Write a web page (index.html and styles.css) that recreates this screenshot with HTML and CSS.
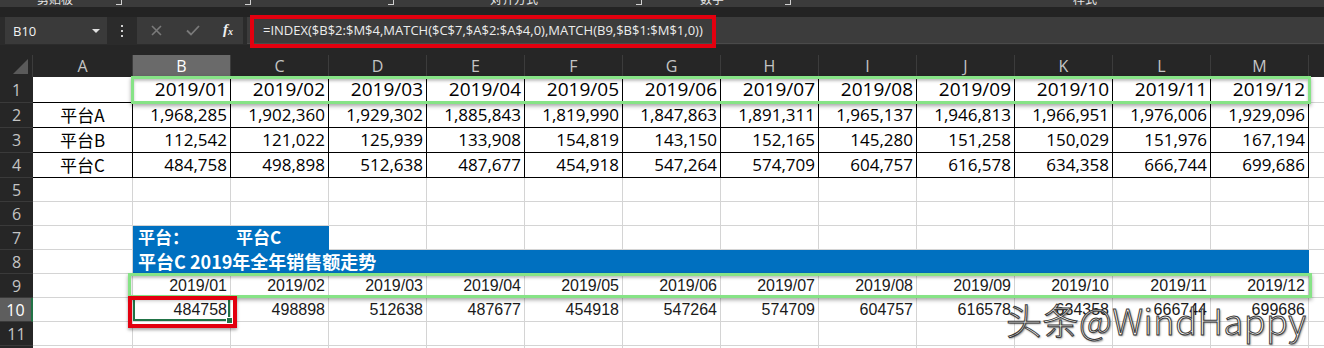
FILE: index.html
```html
<!DOCTYPE html>
<html lang="zh-CN">
<head>
<meta charset="utf-8">
<title>Excel INDEX MATCH</title>
<link rel="stylesheet" href="styles.css">
</head>
<body>
<div class="app">
  <div class="ribbon-tail">
    <span class="frag f1">剪贴板</span>
    <span class="ln l1"></span>
    <span class="ln l2"></span>
    <span class="ln l3"></span>
    <span class="frag f2">对齐方式</span>
    <span class="ln l4"></span>
    <span class="frag f3">数字</span>
    <span class="ln l5"></span>
    <span class="frag f4">样式</span>
  </div>
  <div class="gap-top"></div>
  <div class="fbar">
    <div class="namebox"><span>B10</span><span class="caret"></span></div>
    <div class="dots"><i></i><i></i><i></i></div>
    <div class="fbtns">
      <svg class="ico-x" width="11" height="11" viewBox="0 0 11 11"><path d="M1 1L10 10M10 1L1 10" stroke="#7a7a7a" stroke-width="1.6" fill="none"/></svg>
      <svg class="ico-ok" width="14" height="11" viewBox="0 0 14 11"><path d="M1 5.5L5 9.5L13 1" stroke="#7a7a7a" stroke-width="1.8" fill="none"/></svg>
      <span class="fx">f<sub>x</sub></span>
    </div>
    <div class="finput">=INDEX($B$2:$M$4,MATCH($C$7,$A$2:$A$4,0),MATCH(B9,$B$1:$M$1,0))</div>
  </div>
  <div class="gap-mid"></div>

  <div class="sheet">
    <!-- header row -->
    <div class="corner"><span class="tri"></span></div>
    <div class="ch">A</div><div class="ch sel">B</div><div class="ch">C</div><div class="ch">D</div><div class="ch">E</div><div class="ch">F</div><div class="ch">G</div><div class="ch">H</div><div class="ch">I</div><div class="ch">J</div><div class="ch">K</div><div class="ch">L</div><div class="ch">M</div><div class="ch">N</div>

    <!-- row 1 -->
    <div class="rh">1</div>
    <div class="c bk"></div>
    <div class="c bk t1">2019/01</div><div class="c bk t1">2019/02</div><div class="c bk t1">2019/03</div><div class="c bk t1">2019/04</div><div class="c bk t1">2019/05</div><div class="c bk t1">2019/06</div><div class="c bk t1">2019/07</div><div class="c bk t1">2019/08</div><div class="c bk t1">2019/09</div><div class="c bk t1">2019/10</div><div class="c bk t1">2019/11</div><div class="c bk t1">2019/12</div>
    <div class="c"></div>

    <!-- row 2 -->
    <div class="rh">2</div>
    <div class="c bk lbl">平台A</div>
    <div class="c bk t2">1,968,285</div><div class="c bk t2">1,902,360</div><div class="c bk t2">1,929,302</div><div class="c bk t2">1,885,843</div><div class="c bk t2">1,819,990</div><div class="c bk t2">1,847,863</div><div class="c bk t2">1,891,311</div><div class="c bk t2">1,965,137</div><div class="c bk t2">1,946,813</div><div class="c bk t2">1,966,951</div><div class="c bk t2">1,976,006</div><div class="c bk t2">1,929,096</div>
    <div class="c"></div>

    <!-- row 3 -->
    <div class="rh">3</div>
    <div class="c bk lbl">平台B</div>
    <div class="c bk t2">112,542</div><div class="c bk t2">121,022</div><div class="c bk t2">125,939</div><div class="c bk t2">133,908</div><div class="c bk t2">154,819</div><div class="c bk t2">143,150</div><div class="c bk t2">152,165</div><div class="c bk t2">145,280</div><div class="c bk t2">151,258</div><div class="c bk t2">150,029</div><div class="c bk t2">151,976</div><div class="c bk t2">167,194</div>
    <div class="c"></div>

    <!-- row 4 -->
    <div class="rh">4</div>
    <div class="c bk lbl">平台C</div>
    <div class="c bk t2">484,758</div><div class="c bk t2">498,898</div><div class="c bk t2">512,638</div><div class="c bk t2">487,677</div><div class="c bk t2">454,918</div><div class="c bk t2">547,264</div><div class="c bk t2">574,709</div><div class="c bk t2">604,757</div><div class="c bk t2">616,578</div><div class="c bk t2">634,358</div><div class="c bk t2">666,744</div><div class="c bk t2">699,686</div>
    <div class="c"></div>

    <!-- row 5 -->
    <div class="rh">5</div>
    <div class="c"></div><div class="c"></div><div class="c"></div><div class="c"></div><div class="c"></div><div class="c"></div><div class="c"></div><div class="c"></div><div class="c"></div><div class="c"></div><div class="c"></div><div class="c"></div><div class="c"></div><div class="c"></div>

    <!-- row 6 -->
    <div class="rh">6</div>
    <div class="c"></div><div class="c"></div><div class="c"></div><div class="c"></div><div class="c"></div><div class="c"></div><div class="c"></div><div class="c"></div><div class="c"></div><div class="c"></div><div class="c"></div><div class="c"></div><div class="c"></div><div class="c"></div>

    <!-- row 7 -->
    <div class="rh">7</div>
    <div class="c"></div>
    <div class="c blue">平台：</div><div class="c blue">平台C</div>
    <div class="c"></div><div class="c"></div><div class="c"></div><div class="c"></div><div class="c"></div><div class="c"></div><div class="c"></div><div class="c"></div><div class="c"></div><div class="c"></div><div class="c"></div>

    <!-- row 8 -->
    <div class="rh">8</div>
    <div class="c"></div>
    <div class="c blue title">平台C 2019年全年销售额走势</div>
    <div class="c"></div>

    <!-- row 9 -->
    <div class="rh">9</div>
    <div class="c"></div>
    <div class="c s">2019/01</div><div class="c s">2019/02</div><div class="c s">2019/03</div><div class="c s">2019/04</div><div class="c s">2019/05</div><div class="c s">2019/06</div><div class="c s">2019/07</div><div class="c s">2019/08</div><div class="c s">2019/09</div><div class="c s">2019/10</div><div class="c s">2019/11</div><div class="c s">2019/12</div>
    <div class="c"></div>

    <!-- row 10 -->
    <div class="rh act">10</div>
    <div class="c"></div>
    <div class="c s active">484758</div><div class="c s">498898</div><div class="c s">512638</div><div class="c s">487677</div><div class="c s">454918</div><div class="c s">547264</div><div class="c s">574709</div><div class="c s">604757</div><div class="c s">616578</div><div class="c s">634358</div><div class="c s">666744</div><div class="c s">699686</div>
    <div class="c"></div>

    <!-- row 11 -->
    <div class="rh">11</div>
    <div class="c"></div><div class="c"></div><div class="c"></div><div class="c"></div><div class="c"></div><div class="c"></div><div class="c"></div><div class="c"></div><div class="c"></div><div class="c"></div><div class="c"></div><div class="c"></div><div class="c"></div><div class="c"></div>

    <!-- row 12 -->
    <div class="rh">12</div>
    <div class="c"></div><div class="c"></div><div class="c"></div><div class="c"></div><div class="c"></div><div class="c"></div><div class="c"></div><div class="c"></div><div class="c"></div><div class="c"></div><div class="c"></div><div class="c"></div><div class="c"></div><div class="c"></div>
  </div>

  <div class="hl hl-row1"></div>
  <div class="hl hl-row9"></div>
  <div class="mark mark-b10"></div>
  <div class="mark mark-formula"></div>
  <div class="wm">头条@WindHappy</div>
</div>
</body>
</html>
```

FILE: styles.css
```css
html, body {
  margin: 0;
  padding: 0;
}
body {
  width: 1324px;
  height: 348px;
  overflow: hidden;
  background: #262626;
  font-family: "Open Sans", "Noto Sans CJK SC", sans-serif;
}
.app {
  position: relative;
  width: 1324px;
  height: 348px;
  overflow: hidden;
}

/* ribbon bottom edge */
.ribbon-tail {
  height: 7px;
  background: #3b3b3b;
  display: flex;
  align-items: flex-start;
  overflow: hidden;
}
.frag {
  color: #e6e6e6;
  font-family: "Noto Sans CJK SC", sans-serif;
  font-size: 12px;
  line-height: 12px;
  margin-top: -7px;
  white-space: nowrap;
  flex: none;
}
.ln {
  flex: none;
  width: 5px;
  height: 5px;
  margin-top: -1px;
  border-right: 1px solid #cfcfcf;
  border-bottom: 1px solid #cfcfcf;
}
.f1 { margin-left: 37px; }
.l1 { margin-left: 43px; }
.l2 { margin-left: 123px; }
.l3 { margin-left: 137px; }
.f2 { margin-left: 96px; }
.l4 { margin-left: 98px; }
.f3 { margin-left: 58px; }
.l5 { margin-left: 61px; }
.f4 { margin-left: 282px; }

.gap-top {
  height: 10px;
  background: #232323;
}

/* formula bar */
.fbar {
  height: 28px;
  background: #2b2b2b;
  display: flex;
  align-items: flex-start;
}
.namebox {
  margin-left: 5px;
  width: 102px;
  height: 27px;
  box-sizing: border-box;
  background: #3a3a3a;
  display: flex;
  align-items: center;
  justify-content: space-between;
  padding: 0 7px 0 8px;
  color: #f2f2f2;
  font-size: 13px;
}
.caret {
  width: 0;
  height: 0;
  border-left: 4px solid transparent;
  border-right: 4px solid transparent;
  border-top: 4px solid #e0e0e0;
}
.dots {
  width: 30px;
  height: 27px;
  display: flex;
  flex-direction: column;
  align-items: center;
  justify-content: center;
  gap: 3px;
}
.dots i {
  display: block;
  width: 2px;
  height: 2px;
  background: #d0d0d0;
}
.fbtns {
  width: 106px;
  height: 27px;
  background: #3a3a3a;
  display: flex;
  align-items: center;
  padding-left: 14px;
  box-sizing: border-box;
}
.ico-ok { margin-left: 24px; }
.fx {
  margin-left: 23px;
  color: #f0f0f0;
  font-family: "Liberation Serif", serif;
  font-style: italic;
  font-weight: 700;
  font-size: 15px;
  line-height: 15px;
}
.fx sub {
  font-size: 10px;
  vertical-align: -1px;
}
.finput {
  margin-left: 4px;
  flex: 1;
  height: 27px;
  background: #3c3c3c;
  border-bottom: 1px solid #4a4a4a;
  box-sizing: border-box;
  display: flex;
  align-items: center;
  padding-left: 16px;
  color: #ececec;
  font-size: 13px;
  white-space: nowrap;
}
.gap-mid {
  height: 10px;
  background: #262626;
}

/* sheet grid */
.sheet {
  display: grid;
  grid-template-columns: 33px 100px repeat(13, 98px);
  grid-template-rows: 22px 26px 25px 25px 25px repeat(8, 24px);
  background: #fff;
}
.corner {
  background: #262626;
  position: relative;
  border-right: 1px solid #3c3c3c;
  box-sizing: border-box;
}
.tri {
  position: absolute;
  right: 4px;
  bottom: 3px;
  width: 0;
  height: 0;
  border-left: 15px solid transparent;
  border-bottom: 15px solid #5a5a5a;
}
.ch {
  background: #262626;
  color: #c4c4c4;
  font-size: 16px;
  display: flex;
  align-items: center;
  justify-content: center;
  border-right: 1px solid #3c3c3c;
  box-sizing: border-box;
}
.ch.sel {
  background: #6a6a6a;
  color: #ffffff;
}
.rh {
  background: #262626;
  color: #c4c4c4;
  font-size: 16px;
  display: flex;
  align-items: center;
  justify-content: center;
  border-bottom: 1px solid #3a3a3a;
  box-sizing: border-box;
}
.rh.act {
  background: #5e5e5e;
  color: #fff;
  border-right: 2px solid #217346;
}
.c {
  border-right: 1px solid #d4d4d4;
  border-bottom: 1px solid #d4d4d4;
  box-sizing: border-box;
  overflow: hidden;
  white-space: nowrap;
  display: flex;
  align-items: flex-end;
  color: #000;
}
.bk {
  border-right-color: #000;
  border-bottom-color: #000;
}
.t1 {
  justify-content: flex-end;
  padding: 0 3px 2px 0;
  font-size: 19px;
  line-height: 22px;
}
.t2 {
  justify-content: flex-end;
  padding: 0 3px 1px 0;
  font-size: 17px;
  line-height: 22px;
}
.lbl {
  justify-content: center;
  padding-bottom: 1px;
  font-size: 17px;
  line-height: 22px;
  font-family: "Noto Sans CJK SC", sans-serif;
}
.blue {
  background: #0070c0;
  border-color: #0070c0;
  color: #fff;
  font-family: "Noto Sans CJK SC", sans-serif;
  font-weight: 700;
  font-size: 17px;
  line-height: 22px;
  padding: 0 0 1px 5px;
  overflow: visible;
}
.title {
  grid-column: span 12;
  align-items: center;
  padding: 0 0 2px 5px;
  font-size: 18px;
}
.s {
  justify-content: flex-end;
  padding: 0 3px 1px 0;
  font-family: "Liberation Sans", sans-serif;
  font-size: 16px;
  line-height: 20px;
  color: #1a1a1a;
}
.active {
  position: relative;
  overflow: visible;
  box-shadow: inset 0 0 0 2px #217346;
}
.active::after {
  content: "";
  position: absolute;
  right: -3px;
  bottom: -3px;
  width: 5px;
  height: 5px;
  background: #217346;
  border: 1px solid #fff;
}

/* annotations */
.hl {
  position: absolute;
  box-sizing: border-box;
  border: 3px solid #86e386;
  box-shadow: 0 2px 4px rgba(0, 0, 0, 0.35), inset 0 2px 3px rgba(0, 0, 0, 0.25);
}
.hl-row1 {
  left: 131px;
  top: 76px;
  width: 1180px;
  height: 28px;
}
.hl-row9 {
  left: 128px;
  top: 273px;
  width: 1184px;
  height: 25px;
}
.mark {
  position: absolute;
  box-sizing: border-box;
  border: 4px solid #e3000f;
}
.mark-b10 {
  left: 128px;
  top: 296px;
  width: 109px;
  height: 32px;
  box-shadow: 0 2px 3px rgba(0, 0, 0, 0.35);
}
.mark-formula {
  left: 250px;
  top: 15px;
  width: 466px;
  height: 33px;
}
.wm {
  position: absolute;
  left: 1006px;
  top: 297px;
  font-family: "Noto Sans CJK SC", sans-serif;
  font-weight: 300;
  font-size: 36px;
  line-height: 44px;
  letter-spacing: 0.5px;
  color: #fff;
  -webkit-text-stroke: 1px #3a3a3a;
  text-shadow: 1px 1px 2px rgba(0, 0, 0, 0.55);
  white-space: nowrap;
}
```
